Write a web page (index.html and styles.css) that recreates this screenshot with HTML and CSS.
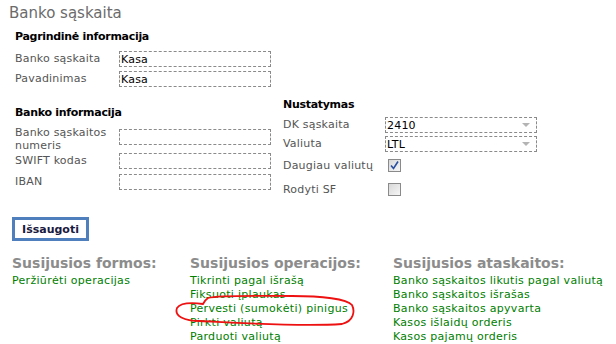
FILE: index.html
```html
<!DOCTYPE html>
<html lang="lt">
<head>
<meta charset="UTF-8">
<title>Banko sąskaita</title>
<link rel="stylesheet" href="styles.css">
</head>
<body>

<div class="page-title">Banko sąskaita</div>

<!-- FORMA -->
<div class="form">

    <div class="sec-title">Pagrindinė informacija</div>
    <div class="row">
        <label>Banko sąskaita</label>
        <input type="text" value="Kasa">
    </div>
    <div class="row">
        <label>Pavadinimas</label>
        <input type="text" value="Kasa">
    </div>

    <div class="cols">
        <div class="col left">
            <div class="sec-title">Banko informacija</div>
            <div class="row tall">
                <label>Banko sąskaitos numeris</label>
                <input type="text" value="">
            </div>
            <div class="row">
                <label>SWIFT kodas</label>
                <input type="text" value="">
            </div>
            <div class="row">
                <label>IBAN</label>
                <input type="text" value="">
            </div>
        </div>

        <div class="col right">
            <div class="sec-title">Nustatymas</div>
            <div class="row">
                <label>DK sąskaita</label>
                <span class="select"><input type="text" value="2410"></span>
            </div>
            <div class="row">
                <label>Valiuta</label>
                <span class="select"><input type="text" value="LTL"></span>
            </div>
            <div class="row check">
                <label>Daugiau valiutų</label>
                <span class="box">
                    <svg width="11" height="11" viewBox="0 0 11 11"><path d="M2 5.5 L4.5 8.5 L9 1.5" fill="none" stroke="#2a4fa0" stroke-width="1.6"/></svg>
                </span>
            </div>
            <div class="row check">
                <label>Rodyti SF</label>
                <span class="box"></span>
            </div>
        </div>
    </div>

</div>

<div class="save-wrap">
    <button class="save-btn">Išsaugoti</button>
</div>

<!-- SUSIJE -->
<div class="related">
    <div>
        <div class="rel-title">Susijusios formos:</div>
        <a href="#">Peržiūrėti operacijas</a>
    </div>
    <div>
        <div class="rel-title">Susijusios operacijos:</div>
        <a href="#">Tikrinti pagal išrašą</a>
        <a href="#">Fiksuoti įplaukas</a>
        <a href="#">Pervesti (sumokėti) pinigus</a>
        <a href="#">Pirkti valiutą</a>
        <a href="#">Parduoti valiutą</a>
    </div>
    <div>
        <div class="rel-title">Susijusios ataskaitos:</div>
        <a href="#">Banko sąskaitos likutis pagal valiutą</a>
        <a href="#">Banko sąskaitos išrašas</a>
        <a href="#">Banko sąskaitos apyvarta</a>
        <a href="#">Kasos išlaidų orderis</a>
        <a href="#">Kasos pajamų orderis</a>
    </div>
</div>

<div class="more">
    <span class="blip"></span>
    <span class="blip second"></span><span class="blip red"></span>
</div>

<!-- raudonas apibraukimas -->
<svg class="mark" width="616" height="344" viewBox="0 0 616 344">
    <path d="M208 298 C205 300 204 302 203 304 C195 303 181 302 177 308 C174 316 184 321 200 321 C240 323 300 327 342 324 C354 321 355 311 352 305 C347 299 322 296 292 296 C252 296 219 295 208 298" fill="none" stroke="#ee1111" stroke-width="1.8"/>
</svg>

</body>
</html>
```

FILE: styles.css
```css
body {
    margin: 0;
    font-family: Verdana, "DejaVu Sans", sans-serif;
    font-size: 11px;
    letter-spacing: 0.2px;
    color: #000;
    background: #fff;
    position: relative;
    height: 344px;
    overflow: hidden;
}

/* TITLE */
.page-title {
    font-size: 15px;
    line-height: 20px;
    letter-spacing: 0;
    color: #6b6b6b;
    padding: 3px 0 0 9px;
}

/* FORM */
.form {
    padding-left: 15px;
    margin-top: 7px;
}

.sec-title {
    font-weight: bold;
    line-height: 14px;
    letter-spacing: -0.3px;
    margin-bottom: 7px;
}

.row {
    display: flex;
    align-items: flex-start;
    margin-bottom: 4px;
}

.row label {
    width: 104px;
    line-height: 13px;
    color: #555;
    padding-top: 1px;
}

.row input {
    box-sizing: border-box;
    width: 152px;
    height: 16px;
    margin: 0;
    padding: 0 1px;
    border: 1px dashed #8a8a8a;
    font-family: inherit;
    font-size: 11px;
    letter-spacing: 0.2px;
    color: #000;
    background: #fff;
    outline: none;
}

.cols {
    display: flex;
    margin-top: 11px;
}

.col.left {
    width: 268px;
    padding-top: 8px;
}

.col.left .sec-title {
    margin-bottom: 6px;
}

.col.left .row.tall {
    margin-bottom: 1px;
}

.col.left .row.tall label {
    padding-top: 0;
}

.col.left .row.tall input {
    margin-top: 3px;
}

.col.left .row {
    margin-bottom: 5px;
}

.col.right .sec-title {
    margin-bottom: 5px;
}

.col.right .row {
    margin-bottom: 3px;
}

.col.right .row label {
    width: 102px;
}

.select {
    position: relative;
    display: inline-block;
}

.select::after {
    content: "";
    position: absolute;
    right: 7px;
    top: 6px;
    border-left: 4px solid transparent;
    border-right: 4px solid transparent;
    border-top: 4px solid #b4b4b4;
}

/* CHECKBOX */
.row.check {
    align-items: center;
    height: 14px;
    margin-top: 6px;
}

.row.check + .row.check {
    margin-top: 10px;
}

.row.check label {
    padding-top: 0;
}

.box {
    box-sizing: border-box;
    width: 13px;
    height: 13px;
    margin-left: 3px;
    border: 1px solid #8a8a8a;
    background: linear-gradient(135deg, #d8d8d8, #f6f6f6);
    display: flex;
    align-items: center;
    justify-content: center;
}

/* SAVE BUTTON */
.save-wrap {
    padding-left: 12px;
    margin-top: 18px;
}

.save-btn {
    box-sizing: border-box;
    height: 24px;
    width: 77px;
    padding: 0;
    border: 3px solid #4f7fbc;
    background: #fff;
    font-family: inherit;
    font-size: 11px;
    font-weight: bold;
    color: #1a1a40;
}

/* RELATED */
.related {
    display: grid;
    grid-template-columns: 178px 203px 1fr;
    padding-left: 12px;
    margin-top: 14px;
}

.rel-title {
    font-size: 14px;
    font-weight: bold;
    line-height: 17px;
    letter-spacing: 0;
    color: #8c8c8c;
    margin-bottom: 2px;
}

.related a {
    display: block;
    line-height: 14px;
    letter-spacing: 0.3px;
    color: #008000;
    text-decoration: none;
}

.more {
    padding-left: 12px;
    display: flex;
}

.blip {
    width: 10px;
    height: 3px;
    background: #cdd8ee;
    margin-top: 0;
}

.blip.second {
    margin-left: 63px;
}

.blip.red {
    width: 2px;
    margin-left: 2px;
    background: #e04040;
}

/* MARK */
.mark {
    position: absolute;
    left: 0;
    top: 0;
    pointer-events: none;
}
```
